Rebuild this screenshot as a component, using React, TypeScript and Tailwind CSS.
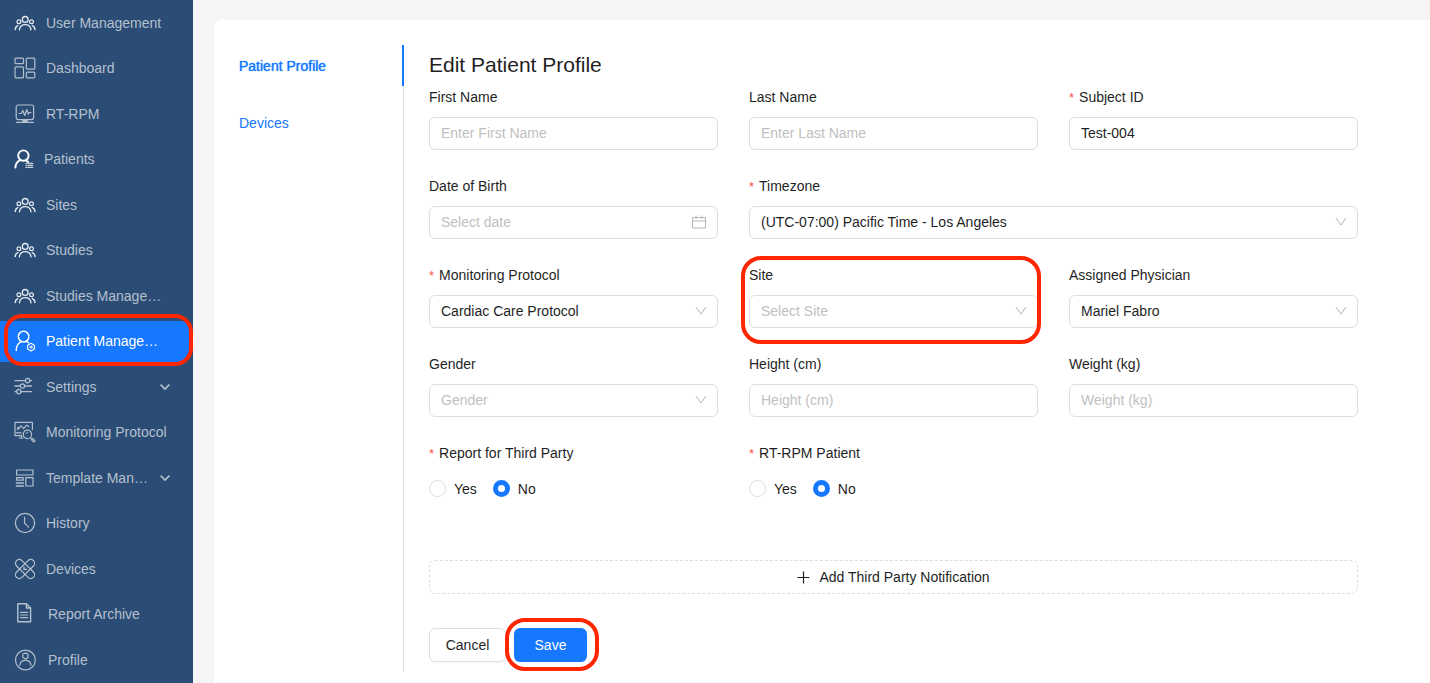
import React from "react";

type IconProps = { className?: string };

function Svg({ children, className = "" }: { children: React.ReactNode; className?: string }) {
  return (
    <svg
      viewBox="0 0 22 22"
      width="22"
      height="22"
      fill="none"
      stroke="currentColor"
      strokeWidth="1.2"
      strokeLinecap="round"
      strokeLinejoin="round"
      aria-hidden="true"
      className={`shrink-0 ${className}`}
    >
      {children}
    </svg>
  );
}

const GroupIcon = () => (
  <Svg className="text-[#e6ebf1]">
    <circle cx="11.200" cy="7.400" r="2.900" strokeWidth="1.300" />
    <circle cx="4.900" cy="9.700" r="1.900" />
    <circle cx="17.500" cy="9.700" r="1.900" />
    <path d="M5.400 17.800c.4-3.200 2.600-5.200 5.800-5.200s5.400 2 5.800 5.200" strokeWidth="1.300" />
    <path d="M1.200 17.400c.2-1.900 1-3.200 2.600-3.800M21 17.400c-.2-1.900-1-3.200-2.600-3.800" strokeWidth="1.500" />
  </Svg>
);

const DashboardIcon = () => (
  <Svg>
    <rect x="1" y="1.100" width="8.500" height="5.600" rx="1" />
    <rect x="12.300" y="1.100" width="8.500" height="11" rx="1" />
    <rect x="1" y="9.800" width="8.500" height="11" rx="1" />
    <rect x="12.300" y="15.200" width="8.500" height="5.600" rx="1" />
  </Svg>
);

const MonitorIcon = () => (
  <Svg>
    <rect x="2.200" y="2" width="17.400" height="14.600" rx="2" />
    <path d="M5 10.500h2.200l1.600-3 2 5 2-6 1.600 4.800 1-1.800h1.600" />
    <path d="M9 18h4" strokeWidth="2" />
    <path d="M2.400 19.400h17" />
  </Svg>
);

const PatientListIcon = () => (
  <Svg className="text-white">
    <circle cx="9.400" cy="7.600" r="5.200" strokeWidth="1.900" />
    <path d="M1.400 19.600c.2-4 2-6.400 5-7.500M12 12.400l2.200 1.600" strokeWidth="1.900" />
    <path d="M12 15.400h.6M12 17.400h.6M12 19.400h.6M14 15.400h4.600M14 17.400h4.600M14 19.400h4.600" strokeWidth="1.300" opacity=".75" />
  </Svg>
);

const PatientGearIcon = () => (
  <Svg className="text-white">
    <circle cx="9.600" cy="6.600" r="5.300" strokeWidth="1.500" />
    <path d="M2.200 20.400c.2-4.600 2-7.500 5-8.800M12.200 11.400l2.200 1.300" strokeWidth="1.500" />
    <path d="M17 13.300l3.400 1.900v3.900l-3.400 1.900-3.400-1.900v-3.900z" strokeWidth="1.100" />
    <circle cx="17" cy="17.100" r="1.100" strokeWidth="1" />
  </Svg>
);

const SlidersIcon = () => (
  <Svg>
    <path d="M1 4.600h10.400M15.800 4.600h1.600M1 10h5.200M10.600 10h6.800M1 15.600h1.600M7 15.600h10.400" strokeWidth="1.400" />
    <circle cx="13.600" cy="4.600" r="2.200" />
    <circle cx="8.400" cy="10" r="2.200" />
    <circle cx="4.800" cy="15.600" r="2.200" />
  </Svg>
);

const ProtocolIcon = () => (
  <Svg>
    <path d="M7.500 14.600H1V1.400h17.400v7" />
    <path d="M2.200 11.800h5M5.500 17h3.500M7.500 14.600v2.400" />
    <path d="M3.400 8.400l3.600-3.600 2.600 2.800 3-3.400 2 1.400" />
    <circle cx="4.400" cy="7.200" r=".7" />
    <circle cx="13.400" cy="13.400" r="4.200" />
    <path d="M16.400 16.600l1.600 1.400M17.300 18.600l1.200-1.200 2.500 2.300-1.200 1.300z" />
    <path d="M11.800 12.600c.4-.9 1.400-1.300 2.200-1.100" strokeWidth=".9" />
  </Svg>
);

const TemplateIcon = () => (
  <Svg>
    <rect x="2.600" y="3" width="16.400" height="5" />
    <rect x="11.800" y="10.600" width="7.200" height="8.400" />
    <rect x="2.600" y="10.600" width="6.600" height="2.600" />
    <path d="M2.400 16h7M2.400 18.900h7" strokeWidth="1.500" />
  </Svg>
);

const ClockIcon = () => (
  <Svg>
    <circle cx="11" cy="11" r="9.600" />
    <path d="M10.600 5.200v6l4 4" />
  </Svg>
);

const DevicesIcon = () => (
  <Svg>
    <rect x="-.9" y="7.200" width="23.800" height="7.600" rx="3.800" transform="rotate(45 11 11)" />
    <rect x="-.9" y="7.200" width="23.800" height="7.600" rx="3.800" transform="rotate(-45 11 11)" />
    <path d="M10 9.200v2.200h2.600" strokeWidth="1.400" />
  </Svg>
);

const DocumentIcon = () => (
  <Svg>
    <path d="M3.800 .8h8.600l4.200 4.200v13.800H3.800zM12.400 .8v4.200h4.200" strokeWidth="1.400" />
    <path d="M6.600 9.400h7M6.600 12h7M6.600 14.600h7" />
  </Svg>
);

const ProfileIcon = () => (
  <Svg>
    <circle cx="11.400" cy="11" r="9.900" />
    <circle cx="11.400" cy="6.900" r="2.800" />
    <path d="M5.800 16.200c.4-3.200 2.600-4.800 5.600-4.800s5.200 1.600 5.600 4.800" />
  </Svg>
);

const Down = ({ className = "" }: IconProps) => (
  <svg viewBox="0 0 12 12" width="12" height="12" fill="none" stroke="currentColor" strokeLinecap="round" strokeLinejoin="round" aria-hidden="true" className={className}>
    <path d="M1.200 2.400L6 9l4.800-6.600" />
  </svg>
);

type NavItem = {
  label: string;
  Icon: () => React.ReactElement;
  gap?: string;
  active?: boolean;
  expandable?: boolean;
};

const nav: NavItem[] = [
  { label: "User Management", Icon: GroupIcon },
  { label: "Dashboard", Icon: DashboardIcon },
  { label: "RT-RPM", Icon: MonitorIcon },
  { label: "Patients", Icon: PatientListIcon, gap: "gap-2" },
  { label: "Sites", Icon: GroupIcon },
  { label: "Studies", Icon: GroupIcon },
  { label: "Studies Manage…", Icon: GroupIcon },
  { label: "Patient Manage…", Icon: PatientGearIcon, active: true },
  { label: "Settings", Icon: SlidersIcon, expandable: true },
  { label: "Monitoring Protocol", Icon: ProtocolIcon },
  { label: "Template Man…", Icon: TemplateIcon, expandable: true },
  { label: "History", Icon: ClockIcon },
  { label: "Devices", Icon: DevicesIcon },
  { label: "Report Archive", Icon: DocumentIcon, gap: "gap-3" },
  { label: "Profile", Icon: ProfileIcon, gap: "gap-3" },
];

function Sidebar() {
  return (
    <nav aria-label="Main" className="w-[193px] shrink-0 bg-[#2a4c75]">
      <ul className="flex min-h-screen flex-col justify-between pb-[3px] pt-[2px]">
        {nav.map(({ label, Icon, gap = "gap-[10px]", active, expandable }) => (
          <li key={label} className="relative pr-1">
            <a
              href="#"
              aria-current={active ? "page" : undefined}
              className={`flex h-[41px] items-center pl-[14px] pr-[18px] ${gap} ${
                active ? "rounded-r-lg bg-[#1677ff] text-white" : "text-[#b4c0ce]"
              }`}
            >
              <Icon />
              <span className="whitespace-nowrap">{label}</span>
              {expandable && (
                <svg viewBox="0 0 12 12" width="12" height="12" fill="none" stroke="currentColor" strokeWidth="1.600" aria-hidden="true" className="ml-auto shrink-0">
                  <path d="M1.600 3.600L6 8l4.400-4.400" />
                </svg>
              )}
            </a>
            {active && (
              <span className="pointer-events-none absolute -bottom-1 -top-[7px] left-1 right-0 rounded-[18px] border-4 border-[#ff2600]" />
            )}
          </li>
        ))}
      </ul>
    </nav>
  );
}

const control =
  "block h-[33px] w-full rounded-md border border-[#dedede] bg-white px-[11px] pb-[2px] text-[#1f1f1f] outline-none placeholder:text-[#bfbfbf]";

function Label({ id, text, required }: { id?: string; text: string; required?: boolean }) {
  const inner = (
    <>
      {required && <span className="mr-[5px] text-[13px] leading-none text-[#ff4d4f]">*</span>}
      {text}
    </>
  );
  return id ? (
    <label htmlFor={id} className="block h-[23px] leading-[23px]">
      {inner}
    </label>
  ) : (
    <legend className="block h-[23px] leading-[23px]">{inner}</legend>
  );
}

function TextField({ id, label, placeholder, value, required }: { id: string; label: string; placeholder?: string; value?: string; required?: boolean }) {
  return (
    <div className="flex flex-col gap-2">
      <Label id={id} text={label} required={required} />
      <input id={id} type="text" placeholder={placeholder} defaultValue={value} required={required} className={control} />
    </div>
  );
}

function DateField() {
  return (
    <div className="flex flex-col gap-2">
      <Label id="dob" text="Date of Birth" />
      <div className="relative">
        <input id="dob" type="text" placeholder="Select date" className={control} />
        <svg viewBox="0 0 14 14" width="14" height="14" fill="none" stroke="#b5b5b5" aria-hidden="true" className="pointer-events-none absolute right-3 top-[9px]">
          <path d="M.5 2.500h13v10.500H.5zM.5 6h13M4 .5v3.500M10 .5v3.500" />
        </svg>
      </div>
    </div>
  );
}

function SelectField({
  id,
  label,
  value,
  placeholder,
  required,
  highlighted,
  className = "",
}: {
  id: string;
  label: string;
  value?: string;
  placeholder?: string;
  required?: boolean;
  highlighted?: boolean;
  className?: string;
}) {
  return (
    <div className={`relative flex flex-col gap-2 ${className}`}>
      <Label id={id} text={label} required={required} />
      <div className="relative">
        <select id={id} className={`${control} appearance-none ${value ? "" : "text-[#bfbfbf]!"}`}>
          <option>{value ?? placeholder}</option>
        </select>
        <Down className="pointer-events-none absolute right-[11px] top-[10px] text-[#b5b5b5]" />
      </div>
      {highlighted && (
        <span className="pointer-events-none absolute -bottom-4 -left-2 -right-[3px] -top-2 rounded-[20px] border-4 border-[#ff2600]" />
      )}
    </div>
  );
}

function YesNo({ name, label }: { name: string; label: string }) {
  return (
    <fieldset>
      <Label text={label} required />
      <div className="mt-2 flex h-[31px] items-center gap-4">
        {["Yes", "No"].map((option) => (
          <label key={option} className="flex items-center gap-2">
            <input
              type="radio"
              name={name}
              defaultChecked={option === "No"}
              className="size-[17px] appearance-none rounded-full border border-[#dedede] bg-white checked:border-[5px] checked:border-[#1677ff]"
            />
            {option}
          </label>
        ))}
      </div>
    </fieldset>
  );
}

export default function App() {
  return (
    <div className="flex min-h-screen bg-[#f5f5f5] font-['Liberation_Sans',Arial,sans-serif] text-[14px] leading-[22px] text-[#1f1f1f]">
      <Sidebar />
      <main className="flex min-w-0 flex-1 pl-[21px] pt-5">
        <div className="flex min-w-0 flex-1 items-start rounded-tl-lg bg-white pb-[11px] pl-[25px] pr-[72px] pt-[25px]">
          <div className="flex min-w-0 flex-1">
            <div className="flex w-[165px] shrink-0 flex-col gap-4 border-r border-[#e0e0e0] text-[#1677ff]">
              <a
                href="#"
                aria-current="page"
                className="-mr-px flex h-[41px] items-center border-r-2 border-[#1677ff] [text-shadow:0_0_1px_currentcolor]"
              >
                Patient Profile
              </a>
              <a href="#" className="flex h-[41px] items-center">
                Devices
              </a>
            </div>

            <form className="min-w-0 flex-1 pb-[10px] pl-[25px] pt-[5px]" onSubmit={(e) => e.preventDefault()}>
              <h1 className="text-[21px] leading-[29px]">Edit Patient Profile</h1>
              <div className="mt-[7px] grid grid-cols-3 gap-x-[31px] gap-y-[25px]">
                <TextField id="first" label="First Name" placeholder="Enter First Name" />
                <TextField id="last" label="Last Name" placeholder="Enter Last Name" />
                <TextField id="subject" label="Subject ID" value="Test-004" required />
                <DateField />
                <SelectField id="tz" label="Timezone" value="(UTC-07:00) Pacific Time - Los Angeles" required className="col-span-2" />
                <SelectField id="protocol" label="Monitoring Protocol" value="Cardiac Care Protocol" required />
                <SelectField id="site" label="Site" placeholder="Select Site" highlighted />
                <SelectField id="physician" label="Assigned Physician" value="Mariel Fabro" />
                <SelectField id="gender" label="Gender" placeholder="Gender" />
                <TextField id="height" label="Height (cm)" placeholder="Height (cm)" />
                <TextField id="weight" label="Weight (kg)" placeholder="Weight (kg)" />
                <YesNo name="report" label="Report for Third Party" />
                <YesNo name="rtrpm" label="RT-RPM Patient" />
              </div>

              <button type="button" className="mt-14 flex h-[34px] w-full items-center justify-center gap-[9px] rounded-md border border-dashed border-[#dedede]">
                <svg viewBox="0 0 13 13" width="13" height="13" stroke="currentColor" strokeWidth="1.200" aria-hidden="true">
                  <path d="M6.500 .5v12M.5 6.500h12" />
                </svg>
                Add Third Party Notification
              </button>

              <div className="mt-[34px] flex gap-2">
                <button type="button" className="h-[34px] w-[77px] rounded-md border border-[#dedede] shadow-[0_2px_0_rgba(0,0,0,0.02)]">
                  Cancel
                </button>
                <div className="relative">
                  <button type="submit" className="h-[34px] w-[73px] rounded-md bg-[#1677ff] text-white">
                    Save
                  </button>
                  <span className="pointer-events-none absolute -bottom-[9px] -left-[9px] -right-3 -top-[10px] rounded-[20px] border-4 border-[#ff2600]" />
                </div>
              </div>
            </form>
          </div>
        </div>
      </main>
    </div>
  );
}
